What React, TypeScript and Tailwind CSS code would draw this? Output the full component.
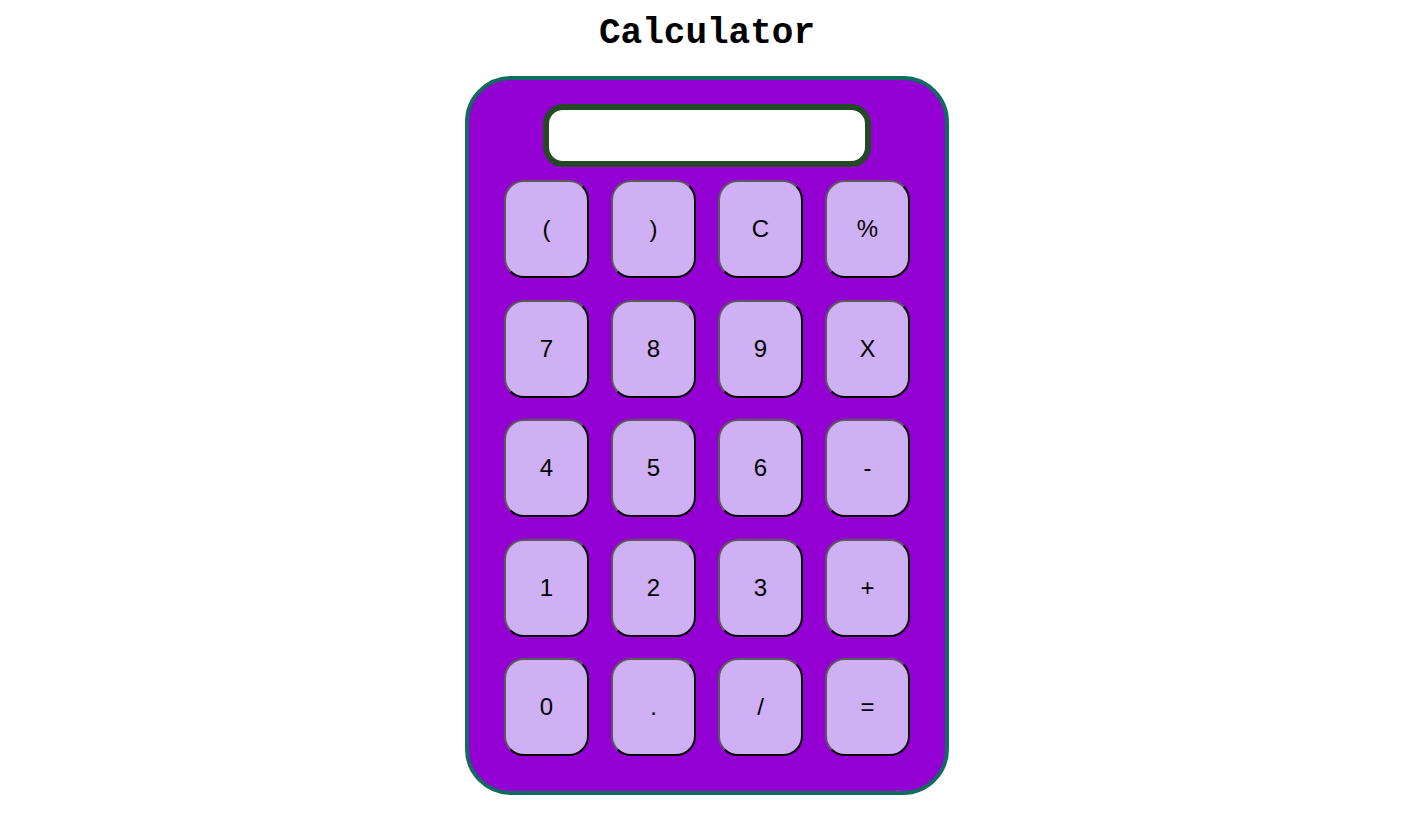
const keys = ['(', ')', 'C', '%', '7', '8', '9', 'X', '4', '5', '6', '-', '1', '2', '3', '+', '0', '.', '/', '='];

function Key(props: { label: string }) {
  return (
    <button className="h-[98px] w-[85px] rounded-[20px] border-2 border-t-[#5a5a5a] border-l-[#5a5a5a] border-r-black border-b-black bg-[#d0b0f4] font-['Liberation_Sans',Arial,sans-serif] text-[24px] text-black">
      {props.label}
    </button>
  );
}

export default function App() {
  return (
    <div className="flex min-h-screen flex-col items-center bg-white pl-[8px]">
      <h1 className="mt-[12px] font-['Liberation_Mono','Courier_New',monospace] text-[36px] leading-[44px] font-bold text-black">
        Calculator
      </h1>
      <div className="mt-[20px] flex w-[484px] flex-col items-center rounded-[46px] border-4 border-[#116b5e] bg-[#9400d3] pt-[24px] pb-[35px]">
        <div className="h-[63px] w-[328px] rounded-[20px] border-[6px] border-[#234a25] bg-white"></div>
        <div className="mt-[13px] grid grid-cols-4 gap-x-[22px] gap-y-[21.5px]">
          {keys.map((k, i) => (
            <Key key={i} label={k} />
          ))}
        </div>
      </div>
    </div>
  );
}
